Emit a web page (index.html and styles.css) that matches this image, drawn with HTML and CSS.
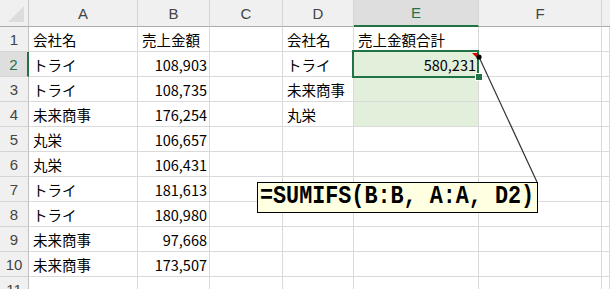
FILE: index.html
```html
<!DOCTYPE html>
<html lang="ja">
<head>
<meta charset="utf-8">
<link rel="stylesheet" href="styles.css">
</head>
<body>
<div class="sheet">
  <div class="corner"><span class="tri"></span></div>
  <div class="ch">A</div><div class="ch">B</div><div class="ch">C</div><div class="ch">D</div><div class="ch ch-sel">E</div><div class="ch">F</div><div class="ch ch-last"></div>

  <div class="rh">1</div><div class="c">会社名</div><div class="c">売上金額</div><div class="c"></div><div class="c">会社名</div><div class="c">売上金額合計</div><div class="c"></div><div class="c"></div>
  <div class="rh rh-sel">2</div><div class="c">トライ</div><div class="c num">108,903</div><div class="c"></div><div class="c">トライ</div><div class="c num fill active">580,231<span class="handle"></span></div><div class="c"></div><div class="c"></div>
  <div class="rh">3</div><div class="c">トライ</div><div class="c num">108,735</div><div class="c"></div><div class="c">未来商事</div><div class="c fill"></div><div class="c"></div><div class="c"></div>
  <div class="rh">4</div><div class="c">未来商事</div><div class="c num">176,254</div><div class="c"></div><div class="c">丸栄</div><div class="c fill"></div><div class="c"></div><div class="c"></div>
  <div class="rh">5</div><div class="c">丸栄</div><div class="c num">106,657</div><div class="c"></div><div class="c"></div><div class="c"></div><div class="c"></div><div class="c"></div>
  <div class="rh">6</div><div class="c">丸栄</div><div class="c num">106,431</div><div class="c"></div><div class="c"></div><div class="c"></div><div class="c"></div><div class="c"></div>
  <div class="rh">7</div><div class="c">トライ</div><div class="c num">181,613</div><div class="c"></div><div class="c"></div><div class="c"></div><div class="c"></div><div class="c"></div>
  <div class="rh">8</div><div class="c">トライ</div><div class="c num">180,980</div><div class="c"></div><div class="c"></div><div class="c"></div><div class="c"></div><div class="c"></div>
  <div class="rh">9</div><div class="c">未来商事</div><div class="c num">97,668</div><div class="c"></div><div class="c"></div><div class="c"></div><div class="c"></div><div class="c"></div>
  <div class="rh">10</div><div class="c">未来商事</div><div class="c num">173,507</div><div class="c"></div><div class="c"></div><div class="c"></div><div class="c"></div><div class="c"></div>
  <div class="rh">11</div><div class="c"></div><div class="c"></div><div class="c"></div><div class="c"></div><div class="c"></div><div class="c"></div><div class="c"></div>
</div>

<svg class="callout-line" width="610" height="289" viewBox="0 0 610 289">
  <line x1="479" y1="57" x2="537" y2="182" stroke="#333" stroke-width="1.2"/>
  <circle cx="479" cy="57" r="2.6" fill="#000"/>
</svg>
<div class="formula"><span class="ftext">=SUMIFS(B:B, A:A, D2)</span></div>
</body>
</html>
```
FILE: styles.css
```css
html, body {
  margin: 0;
  padding: 0;
  background: #fff;
  overflow: hidden;
}
body {
  width: 610px;
  height: 289px;
  position: relative;
  font-family: "Noto Sans CJK JP", "Noto Sans", sans-serif;
}
.sheet {
  display: grid;
  grid-template-columns: 29px 109px 72px 73px 71px 125px 123px 1fr;
  grid-template-rows: 27px repeat(11, 25px);
  width: 610px;
}
.corner {
  background: #f0f0f0;
  border-right: 1px solid #c8c8c8;
  border-bottom: 1px solid #ababab;
  position: relative;
}
.corner .tri {
  position: absolute;
  right: 4px;
  bottom: 4px;
  width: 0;
  height: 0;
  border-left: 16px solid transparent;
  border-bottom: 16px solid #dcdcdc;
}
.ch {
  background: #f0f0f0;
  border-right: 1px solid #d4d4d4;
  border-bottom: 1px solid #ababab;
  display: flex;
  align-items: center;
  justify-content: center;
  font-family: "Liberation Sans", Arial, sans-serif;
  font-size: 15px;
  color: #444;
}
.ch-sel {
  background: #dedede;
  color: #217346;
  border-bottom: 2px solid #217346;
}
.ch-last { border-right: none; }
.rh {
  background: #f0f0f0;
  border-right: 1px solid #c0c0c0;
  border-bottom: 1px solid #d4d4d4;
  display: flex;
  align-items: center;
  justify-content: center;
  font-family: "Liberation Sans", Arial, sans-serif;
  font-size: 15px;
  color: #444;
}
.rh-sel {
  background: #dedede;
  color: #217346;
  border-right: 2px solid #217346;
}
.c {
  border-right: 1px solid #dadada;
  border-bottom: 1px solid #dadada;
  font-size: 14.5px;
  color: #000;
  display: flex;
  align-items: center;
  padding: 0 3px 0 4px;
  white-space: nowrap;
  overflow: visible;
  min-width: 0;
}
.num {
  justify-content: flex-end;
  padding-right: 2px;
}
.fill { background: #e2efda; }
.active {
  position: relative;
  overflow: visible;
}
.active::before {
  content: "";
  position: absolute;
  left: -2px;
  top: -2px;
  right: -1px;
  bottom: -2px;
  border: 2px solid #217346;
  pointer-events: none;
}
.active::after {
  content: "";
  position: absolute;
  right: 0;
  top: 1px;
  width: 0;
  height: 0;
  border-left: 6px solid transparent;
  border-top: 6px solid #e00000;
}
.handle {
  position: absolute;
  right: -5px;
  bottom: -5px;
  width: 6px;
  height: 6px;
  background: #217346;
  border: 1px solid #fff;
  z-index: 2;
}
.callout-line {
  position: absolute;
  left: 0;
  top: 0;
}
.formula {
  position: absolute;
  left: 257px;
  top: 182px;
  width: 281px;
  height: 31px;
  box-sizing: border-box;
  border: 1.5px solid #000;
  background: #ffffe1;
  padding-left: 2px;
  overflow: hidden;
}
.ftext {
  display: inline-block;
  font-family: "Liberation Mono", "DejaVu Sans Mono", monospace;
  font-weight: bold;
  font-size: 25px;
  line-height: 28px;
  white-space: pre;
  color: #000;
  transform: scaleX(0.87);
  transform-origin: left center;
}
```
